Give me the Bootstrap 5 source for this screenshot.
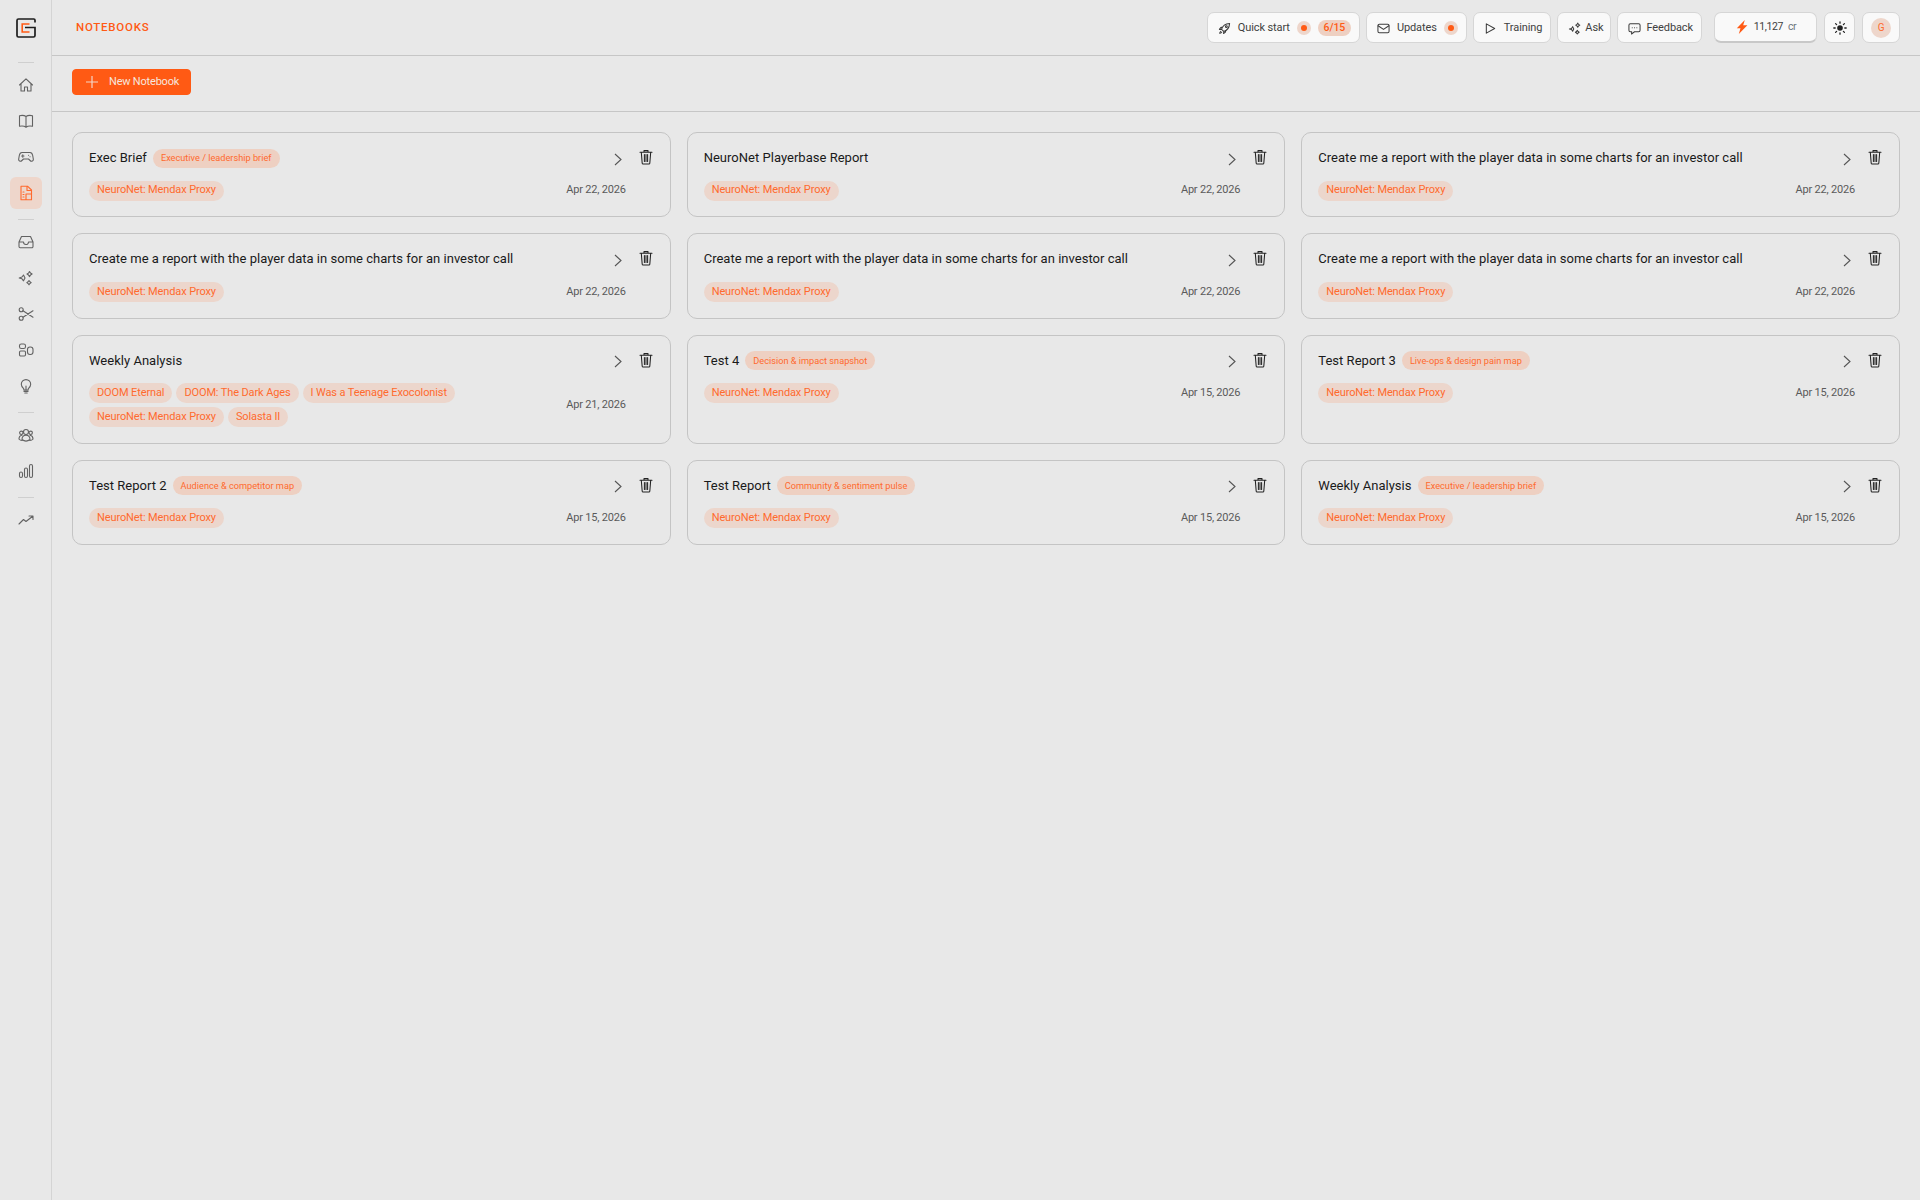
<!DOCTYPE html>
<html lang="en">
<head>
<meta charset="utf-8">
<title>Notebooks</title>
<link href="https://cdn.jsdelivr.net/npm/bootstrap@5.3.0/dist/css/bootstrap.min.css" rel="stylesheet">
<style>
html,body{height:100%}
body{background:#e8e8e8;font-family:Roboto,"Liberation Sans",sans-serif;color:#1c1c1c;overflow:hidden}
.side-rail{width:52px;flex:none;border-right:1px solid #d4d4d4;padding-top:18px;gap:4px}
.rail-logo{width:20px;height:20px;margin-bottom:14px}
.rail-sep{width:16px;height:1px;background:#cfcfcf;margin:6px 0 2px}
.rail-item{width:32px;height:32px;border-radius:6px;color:#626262}
.rail-item.is-on{background:#eed6cb;color:#ff6a2e}
.rail-item svg{width:16px;height:16px;fill:none;stroke:currentColor;stroke-width:1.1;stroke-linecap:round;stroke-linejoin:round}
.top-head{height:56px;border-bottom:1px solid #c6c6c6;padding:0 20px 0 24px}
.page-title{font-size:11.5px;letter-spacing:.75px;color:#ff5a14;font-weight:500}
.head-group{gap:6px;margin-right:12px}
.head-right{gap:7px}
.head-btn{height:31px;background:#f9f9f9;border:1px solid #d6d6d6;border-radius:7px;font-size:11px;letter-spacing:-.1px;color:#3f3f3f;padding:1px 8px 0 10px;gap:7px}
.head-btn.tight-btn{gap:5px}
.head-btn.ask-btn{gap:4px;padding-right:7px}
.head-btn svg{width:13px;height:13px;fill:none;stroke:#3c3c3c;stroke-width:1.1;stroke-linecap:round;stroke-linejoin:round;flex:none}
.dot-ring{width:14px;height:14px;border-radius:50%;background:#eed6cb}
.dot-core{width:6px;height:6px;border-radius:50%;background:#ff5a14}
.count-pill{background:#eed0c2;color:#ff5a14;border-radius:9px;height:16px;width:33px;font-size:10.5px;font-weight:500}
.head-btn.credit-box{border-bottom:2px solid #c8c8c8;width:103px;padding:0;gap:5px;font-size:10.5px;letter-spacing:-.4px}
.head-btn.credit-box svg{width:14px;height:14px}
.head-btn.sun-btn{width:31px;padding:0}
.head-btn.user-btn{width:38px;padding:0}
.sun-btn svg{width:14px;height:14px}
.avatar-dot{width:20px;height:20px;border-radius:50%;background:#eed6cb;color:#ff6a2e;font-size:10px}
.tool-bar{height:56px;border-bottom:1px solid #c6c6c6;padding:13px 20px}
.new-btn{height:26px;width:119px;background:#ff5a14;border-color:#ff5a14;border-radius:4px;color:#f6e6de;font-size:11px;letter-spacing:-.2px;padding:0 0 0 13px;gap:11px}
.new-btn svg{width:12px;height:12px;stroke:#f4d5c6;stroke-width:1.2;fill:none}
.content-wrap{padding:20px}
.note-card{background:transparent;border:1px solid #c4c4c4;border-radius:10px;padding:16px 17px 15.75px 16px;height:100%;gap:13px}
.note-title{font-size:13px;font-weight:450;line-height:18px;color:#1a1a1a;letter-spacing:.02px;white-space:nowrap}
.type-pill{background:#eed0c2;color:#ff6a2e;font-size:9.2px;height:19px;border-radius:10px;padding:0 8px;margin-left:6px;white-space:nowrap}
.game-pill{background:#ecd6cc;color:#ff6a2e;font-size:11px;letter-spacing:-.12px;height:20px;border-radius:10px;padding:0 8px}
.pill-wrap{gap:4px}
.note-date{font-size:11px;letter-spacing:-.2px;color:#5a5a5a;white-space:nowrap}
.chev-ico{width:8px;height:13px;margin-right:4px;margin-top:2px;stroke:#555;stroke-width:1.1;fill:none;flex:none}
.trash-ico{width:14px;height:16px;stroke:#222;stroke-width:1.05;fill:none;flex:none;stroke-linecap:round;stroke-linejoin:round}
.head-row{height:18px;margin-bottom:13.500px}
</style>
</head>
<body>
<svg width="0" height="0" class="position-absolute">
<defs>
<symbol id="i-chev" viewBox="0 0 8 13"><path d="M1 1l6 5.500L1 12"/></symbol>
<symbol id="i-trash" viewBox="0 0 14 16"><path d="M1 3.200h12M5 3V1.600h4V3M2.300 3.200l.9 11a.9.9 0 0 0 .9.8h5.800a.9.9 0 0 0 .9-.8l.9-11M5.400 5.500v7M7 5.500v7M8.600 5.500v7"/></symbol>
</defs>
</svg>
<div class="d-flex vh-100">
<aside class="side-rail d-flex flex-column align-items-center">
  <svg class="rail-logo" viewBox="0 0 20 20" fill="none"><path d="M19 4.500V2.200A1.200 1.200 0 0 0 17.800 1H2.500A1.500 1.500 0 0 0 1 2.500v15A1.500 1.500 0 0 0 2.500 19h15a1.500 1.500 0 0 0 1.500-1.500V9.500H9" stroke="#1d1d1d" stroke-width="1.700"/><path d="M13.500 6H6.200v8h7.300" stroke="#ff5a14" stroke-width="1.600"/></svg>
  <div class="rail-sep"></div>
  <a class="rail-item d-flex align-items-center justify-content-center"><svg viewBox="0 0 16 16"><path d="M1.500 8L8 1.800 14.500 8M3 7v7h3.500v-4h3v4H13V7"/></svg></a>
  <a class="rail-item d-flex align-items-center justify-content-center"><svg viewBox="0 0 16 16"><path d="M8 3.500C6.500 2.400 4 2.200 1.500 2.700v10.600c2.500-.5 5-.2 6.500.9 1.500-1.100 4-1.400 6.500-.9V2.700C12 2.200 9.500 2.400 8 3.500zM8 3.500v10.700"/></svg></a>
  <a class="rail-item d-flex align-items-center justify-content-center"><svg viewBox="0 0 16 16"><path d="M4 3.500h8c1.600 0 2.300 1 2.700 3l.6 3.500c.3 1.800-1.800 3-3.200 1.500L10.500 10h-5L3.900 11.500C2.500 13 .4 11.800.7 10l.6-3.500c.4-2 1.100-3 2.700-3zM4.800 5.800v2.400M3.600 7h2.400M10.500 6.300h.1M12 7.700h.1"/></svg></a>
  <a class="rail-item is-on d-flex align-items-center justify-content-center"><svg viewBox="0 0 16 16"><path d="M3 1.200h6.500L13.500 5v9.800H3zM9 1.500V5.500h4.300M8 9h5M8 9v5.500"/><path d="M5 7h1M5 9.500h1M5 12h1"/></svg></a>
  <div class="rail-sep"></div>
  <a class="rail-item d-flex align-items-center justify-content-center"><svg viewBox="0 0 16 16"><path d="M3.500 2.500h9l2.500 5.500v4.500a1.200 1.200 0 0 1-1.200 1.200H2.200A1.200 1.200 0 0 1 1 12.500V8zM1 8h4.500a2.500 2.500 0 0 0 5 0H15"/></svg></a>
  <a class="rail-item d-flex align-items-center justify-content-center"><svg viewBox="0 0 16 16"><path d="M5.500 5L7 8l-1.500 2.800L4 8.800 1.200 8 4 7zM11.500 1.500l1 1.600 1.600.9-1.600 1-1 1.600-1-1.600L9 4l1.500-.9zM11 10.500l.9 1.300 1.300.8-1.300.9-.9 1.300-.9-1.300-1.300-.9 1.300-.8z"/></svg></a>
  <a class="rail-item d-flex align-items-center justify-content-center"><svg viewBox="0 0 16 16"><circle cx="3.200" cy="3.800" r="2"/><circle cx="3.200" cy="12.200" r="2"/><path d="M5 4.800l10 6.400M5 11.200l10-6.400"/></svg></a>
  <a class="rail-item d-flex align-items-center justify-content-center"><svg viewBox="0 0 16 16"><rect x="1.500" y="2" width="6" height="4.500" rx="1.800"/><rect x="1.500" y="9" width="6" height="5" rx="1.200"/><rect x="9.500" y="5" width="5.500" height="7.500" rx="2.500"/></svg></a>
  <a class="rail-item d-flex align-items-center justify-content-center"><svg viewBox="0 0 16 16"><path d="M5.800 10.800C4.600 9.800 3.300 8.500 3.300 6.300a4.700 4.700 0 0 1 9.400 0c0 2.200-1.300 3.500-2.500 4.500v1.200H5.800zM6 13.400h4M6.800 15h2.400M8 12V8"/></svg></a>
  <div class="rail-sep"></div>
  <a class="rail-item d-flex align-items-center justify-content-center"><svg viewBox="0 0 16 16"><circle cx="8" cy="5" r="2.500"/><circle cx="3.300" cy="5.800" r="1.700"/><circle cx="12.700" cy="5.800" r="1.700"/><path d="M1 12c0-2.500 1.200-3.500 3-3.800M15 12c0-2.500-1.200-3.500-3-3.800M4 12.500c0-2.500 1.700-4.200 4-4.200s4 1.700 4 4.200c-2.500 2-5.500 2-8 0zM1 12c.8 1 2 1.500 3 1.500M15 12c-.8 1-2 1.500-3 1.500"/></svg></a>
  <a class="rail-item d-flex align-items-center justify-content-center"><svg viewBox="0 0 16 16"><rect x="1.500" y="9" width="3" height="5.500" rx="1.500"/><rect x="6.500" y="5" width="3" height="9.500" rx="1.500"/><rect x="11.500" y="1.500" width="3" height="13" rx="1.500"/></svg></a>
  <div class="rail-sep"></div>
  <a class="rail-item d-flex align-items-center justify-content-center"><svg viewBox="0 0 16 16"><path d="M1 12l4.500-4.500 2.500 2L15 4M11 4h4v3.500"/></svg></a>
</aside>
<main class="flex-grow-1 d-flex flex-column">
  <header class="top-head d-flex align-items-center justify-content-between">
    <div class="page-title">NOTEBOOKS</div>
    <div class="d-flex align-items-center">
      <div class="d-flex align-items-center head-group">
        <button class="head-btn d-flex align-items-center"><svg viewBox="0 0 14 14"><path d="M5 9L3.800 7.800c1-3.500 4-6 8.700-6.300-.3 4.700-2.800 7.700-6.300 8.700zM3.800 7.800L1.500 8l1.500-2 2-.5M6.200 10.200L6 12.500l2-1.500.5-2M3 10c-1 .8-1.200 2-1.200 2.200.2 0 1.400-.2 2.200-1.200"/><circle cx="9" cy="5" r="1"/></svg><span>Quick start</span><span class="dot-ring d-flex align-items-center justify-content-center"><span class="dot-core"></span></span><span class="count-pill d-flex align-items-center justify-content-center">6/15</span></button>
        <button class="head-btn d-flex align-items-center"><svg viewBox="0 0 14 14"><rect x="1" y="2.500" width="12" height="9" rx="1.500"/><path d="M1.200 4L7 8l5.800-4"/></svg><span>Updates</span><span class="dot-ring d-flex align-items-center justify-content-center"><span class="dot-core"></span></span></button>
        <button class="head-btn d-flex align-items-center"><svg viewBox="0 0 14 14"><path d="M2.500 2v10l9-5z"/></svg><span>Training</span></button>
        <button class="head-btn ask-btn d-flex align-items-center"><svg viewBox="0 0 14 14"><path d="M5 5l1.200 2.500L5 10 3.800 8 1.500 7.500 3.800 7zM10.500 1.200l.8 1.400 1.400.8-1.400.9-.8 1.400-.8-1.400-1.400-.9 1.400-.8zM10 9l.8 1.200 1.200.8-1.200.8-.8 1.200-.8-1.200-1.200-.8 1.200-.8z"/></svg><span>Ask</span></button>
        <button class="head-btn tight-btn d-flex align-items-center"><svg viewBox="0 0 14 14"><path d="M2.500 2h9A1.500 1.500 0 0 1 13 3.500v5.500a1.500 1.500 0 0 1-1.500 1.500H7L3.800 13l.2-2.500H2.500A1.500 1.500 0 0 1 1 9V3.500A1.500 1.500 0 0 1 2.500 2z"/><path d="M4.500 6.200h.1M7 6.200h.1M9.500 6.200h.1"/></svg><span>Feedback</span></button>
      </div>
      <div class="d-flex align-items-center head-right">
      <div class="head-btn credit-box d-flex align-items-center justify-content-center"><svg viewBox="0 0 14 14"><path d="M9.800 0L1.800 8.200h3.700L3.800 14l8.600-8.800H8.200z" style="fill:#ff5a14;stroke:none"/></svg><span>11,127</span><span class="text-secondary">cr</span></div>
      <button class="head-btn sun-btn d-flex align-items-center justify-content-center"><svg viewBox="0 0 14 14"><circle cx="7" cy="7" r="2.800" style="fill:#222;stroke:none"/><path d="M7 .8v1.400M7 11.800v1.400M.8 7h1.400M11.800 7h1.400M2.600 2.600l1 1M10.400 10.400l1 1M2.600 11.400l1-1M10.400 3.600l1-1" style="stroke:#222;stroke-width:1.300"/></svg></button>
      <button class="head-btn user-btn d-flex align-items-center justify-content-center"><span class="avatar-dot d-flex align-items-center justify-content-center">G</span></button>
      </div>
    </div>
  </header>
  <div class="tool-bar">
    <button class="btn new-btn d-flex align-items-center"><svg viewBox="0 0 12 12"><path d="M6 0v12M0 6h12"/></svg><span>New Notebook</span></button>
  </div>
  <div class="content-wrap">
    <div class="row row-cols-3 g-3">
      <div class="col"><div class="note-card d-flex"><div class="flex-grow-1"><div class="head-row d-flex align-items-center"><span class="note-title">Exec Brief</span><span class="type-pill d-flex align-items-center">Executive / leadership brief</span><svg class="chev-ico ms-auto"><use href="#i-chev"/></svg></div><div class="d-flex align-items-center justify-content-between"><div class="pill-wrap d-flex flex-wrap"><span class="game-pill d-flex align-items-center">NeuroNet: Mendax Proxy</span></div><span class="note-date">Apr 22, 2026</span></div></div><svg class="trash-ico"><use href="#i-trash"/></svg></div></div>
      <div class="col"><div class="note-card d-flex"><div class="flex-grow-1"><div class="head-row d-flex align-items-center"><span class="note-title">NeuroNet Playerbase Report</span><svg class="chev-ico ms-auto"><use href="#i-chev"/></svg></div><div class="d-flex align-items-center justify-content-between"><div class="pill-wrap d-flex flex-wrap"><span class="game-pill d-flex align-items-center">NeuroNet: Mendax Proxy</span></div><span class="note-date">Apr 22, 2026</span></div></div><svg class="trash-ico"><use href="#i-trash"/></svg></div></div>
      <div class="col"><div class="note-card d-flex"><div class="flex-grow-1"><div class="head-row d-flex align-items-center"><span class="note-title">Create me a report with the player data in some charts for an investor call</span><svg class="chev-ico ms-auto"><use href="#i-chev"/></svg></div><div class="d-flex align-items-center justify-content-between"><div class="pill-wrap d-flex flex-wrap"><span class="game-pill d-flex align-items-center">NeuroNet: Mendax Proxy</span></div><span class="note-date">Apr 22, 2026</span></div></div><svg class="trash-ico"><use href="#i-trash"/></svg></div></div>
      <div class="col"><div class="note-card d-flex"><div class="flex-grow-1"><div class="head-row d-flex align-items-center"><span class="note-title">Create me a report with the player data in some charts for an investor call</span><svg class="chev-ico ms-auto"><use href="#i-chev"/></svg></div><div class="d-flex align-items-center justify-content-between"><div class="pill-wrap d-flex flex-wrap"><span class="game-pill d-flex align-items-center">NeuroNet: Mendax Proxy</span></div><span class="note-date">Apr 22, 2026</span></div></div><svg class="trash-ico"><use href="#i-trash"/></svg></div></div>
      <div class="col"><div class="note-card d-flex"><div class="flex-grow-1"><div class="head-row d-flex align-items-center"><span class="note-title">Create me a report with the player data in some charts for an investor call</span><svg class="chev-ico ms-auto"><use href="#i-chev"/></svg></div><div class="d-flex align-items-center justify-content-between"><div class="pill-wrap d-flex flex-wrap"><span class="game-pill d-flex align-items-center">NeuroNet: Mendax Proxy</span></div><span class="note-date">Apr 22, 2026</span></div></div><svg class="trash-ico"><use href="#i-trash"/></svg></div></div>
      <div class="col"><div class="note-card d-flex"><div class="flex-grow-1"><div class="head-row d-flex align-items-center"><span class="note-title">Create me a report with the player data in some charts for an investor call</span><svg class="chev-ico ms-auto"><use href="#i-chev"/></svg></div><div class="d-flex align-items-center justify-content-between"><div class="pill-wrap d-flex flex-wrap"><span class="game-pill d-flex align-items-center">NeuroNet: Mendax Proxy</span></div><span class="note-date">Apr 22, 2026</span></div></div><svg class="trash-ico"><use href="#i-trash"/></svg></div></div>
      <div class="col"><div class="note-card d-flex"><div class="flex-grow-1"><div class="head-row d-flex align-items-center"><span class="note-title">Weekly Analysis</span><svg class="chev-ico ms-auto"><use href="#i-chev"/></svg></div><div class="d-flex align-items-center justify-content-between"><div class="pill-wrap d-flex flex-wrap"><span class="game-pill d-flex align-items-center">DOOM Eternal</span><span class="game-pill d-flex align-items-center">DOOM: The Dark Ages</span><span class="game-pill d-flex align-items-center">I Was a Teenage Exocolonist</span><span class="game-pill d-flex align-items-center">NeuroNet: Mendax Proxy</span><span class="game-pill d-flex align-items-center">Solasta II</span></div><span class="note-date">Apr 21, 2026</span></div></div><svg class="trash-ico"><use href="#i-trash"/></svg></div></div>
      <div class="col"><div class="note-card d-flex"><div class="flex-grow-1"><div class="head-row d-flex align-items-center"><span class="note-title">Test 4</span><span class="type-pill d-flex align-items-center">Decision &amp; impact snapshot</span><svg class="chev-ico ms-auto"><use href="#i-chev"/></svg></div><div class="d-flex align-items-center justify-content-between"><div class="pill-wrap d-flex flex-wrap"><span class="game-pill d-flex align-items-center">NeuroNet: Mendax Proxy</span></div><span class="note-date">Apr 15, 2026</span></div></div><svg class="trash-ico"><use href="#i-trash"/></svg></div></div>
      <div class="col"><div class="note-card d-flex"><div class="flex-grow-1"><div class="head-row d-flex align-items-center"><span class="note-title">Test Report 3</span><span class="type-pill d-flex align-items-center">Live-ops &amp; design pain map</span><svg class="chev-ico ms-auto"><use href="#i-chev"/></svg></div><div class="d-flex align-items-center justify-content-between"><div class="pill-wrap d-flex flex-wrap"><span class="game-pill d-flex align-items-center">NeuroNet: Mendax Proxy</span></div><span class="note-date">Apr 15, 2026</span></div></div><svg class="trash-ico"><use href="#i-trash"/></svg></div></div>
      <div class="col"><div class="note-card d-flex"><div class="flex-grow-1"><div class="head-row d-flex align-items-center"><span class="note-title">Test Report 2</span><span class="type-pill d-flex align-items-center">Audience &amp; competitor map</span><svg class="chev-ico ms-auto"><use href="#i-chev"/></svg></div><div class="d-flex align-items-center justify-content-between"><div class="pill-wrap d-flex flex-wrap"><span class="game-pill d-flex align-items-center">NeuroNet: Mendax Proxy</span></div><span class="note-date">Apr 15, 2026</span></div></div><svg class="trash-ico"><use href="#i-trash"/></svg></div></div>
      <div class="col"><div class="note-card d-flex"><div class="flex-grow-1"><div class="head-row d-flex align-items-center"><span class="note-title">Test Report</span><span class="type-pill d-flex align-items-center">Community &amp; sentiment pulse</span><svg class="chev-ico ms-auto"><use href="#i-chev"/></svg></div><div class="d-flex align-items-center justify-content-between"><div class="pill-wrap d-flex flex-wrap"><span class="game-pill d-flex align-items-center">NeuroNet: Mendax Proxy</span></div><span class="note-date">Apr 15, 2026</span></div></div><svg class="trash-ico"><use href="#i-trash"/></svg></div></div>
      <div class="col"><div class="note-card d-flex"><div class="flex-grow-1"><div class="head-row d-flex align-items-center"><span class="note-title">Weekly Analysis</span><span class="type-pill d-flex align-items-center">Executive / leadership brief</span><svg class="chev-ico ms-auto"><use href="#i-chev"/></svg></div><div class="d-flex align-items-center justify-content-between"><div class="pill-wrap d-flex flex-wrap"><span class="game-pill d-flex align-items-center">NeuroNet: Mendax Proxy</span></div><span class="note-date">Apr 15, 2026</span></div></div><svg class="trash-ico"><use href="#i-trash"/></svg></div></div>
    </div>
  </div>
</main>
</div>
<script src="https://cdn.jsdelivr.net/npm/bootstrap@5.3.0/dist/js/bootstrap.bundle.min.js"></script>
</body>
</html>
